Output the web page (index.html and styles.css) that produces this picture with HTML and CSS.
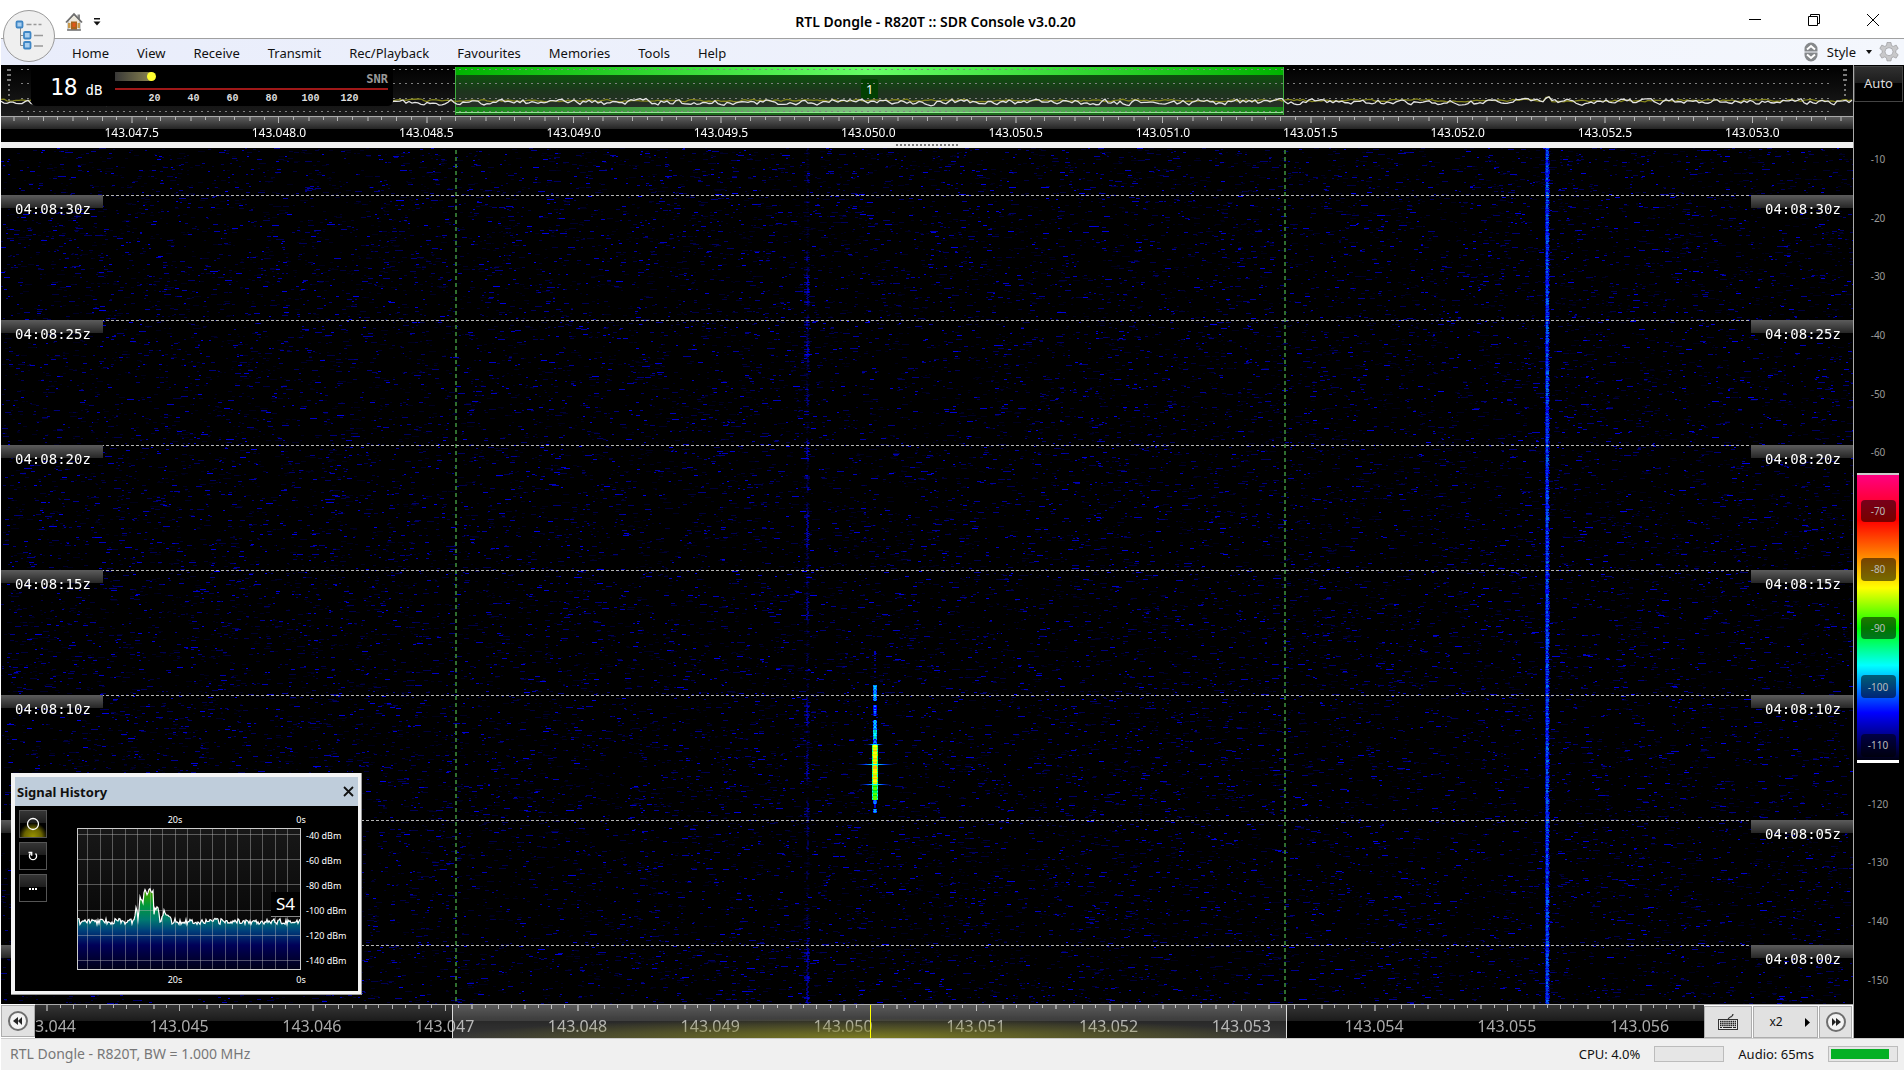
FILE: index.html
```html
<!DOCTYPE html>
<html lang="en">
<head>
<meta charset="utf-8">
<title>RTL Dongle - R820T :: SDR Console v3.0.20</title>
<link rel="stylesheet" href="styles.css">
</head>
<body>
<header class="titlebar">
  <button class="app-button" aria-label="Application menu">
    <svg width="54" height="54" viewBox="0 0 54 54"><circle cx="27" cy="27" r="25.5" fill="#efefef" stroke="#9a9a9a"/><path d="M18.500 18v18.500h4M18.500 26.500h4" fill="none" stroke="#8a8a8a"/><path d="M24.500 15.500h5m2 0h3m2 0h3M32 26.500h9M32 37h9" stroke="#999" stroke-width="1.300" fill="none"/><g fill="#a9cff0" stroke="#3f86c4" stroke-width="1.800"><rect x="14.500" y="12.500" width="6" height="6" rx="1"/><rect x="22" y="23" width="6.500" height="6.500" rx="1"/><rect x="22" y="33" width="6.500" height="6.500" rx="1"/></g></svg>
  </button>
  <div class="quick">
    <button class="plain" aria-label="Home">
      <svg width="18" height="20" viewBox="0 0 18 20"><path d="M12.500 2.500h2.500v5h-2.500z" fill="#888"/><path d="M3 9l6-6 6 6v9H3z" fill="#ece8dc" stroke="#aaa"/><path d="M1 10.500L9 2l8 8.500" fill="none" stroke="#6e6e6e" stroke-width="1.800"/><path d="M3 11h2.500v5H3zM12.500 11H15v5h-2.500z" fill="#c99a4a"/><path d="M6 9.500h6V18H6z" fill="#a8641c"/><path d="M7.500 11h3v4h-3z" fill="#e0561a"/><path d="M2 18h14" stroke="#777" stroke-width="1.500"/></svg>
    </button>
    <button class="plain" aria-label="Customise toolbar">
      <svg width="8" height="10" viewBox="0 0 8 10"><path d="M1 1h6v1.500H1zM0.500 4.500h7L4 8.500z" fill="#111"/></svg>
    </button>
  </div>
  <h1 class="title">RTL Dongle - R820T :: SDR Console v3.0.20</h1>
  <div class="window-buttons">
    <button class="plain" aria-label="Minimise"><svg width="14" height="14" viewBox="0 0 14 14"><path d="M1 6.500h12" stroke="#000"/></svg></button>
    <button class="plain" aria-label="Restore"><svg width="14" height="14" viewBox="0 0 14 14"><path d="M1.500 3.500h9v9h-9zM3.500 3.500v-2h9v9h-2" fill="none" stroke="#000"/></svg></button>
    <button class="plain" aria-label="Close"><svg width="14" height="14" viewBox="0 0 14 14"><path d="M1 1l12 12M13 1L1 13" stroke="#000"/></svg></button>
  </div>
</header>

<nav class="menubar">
  <div class="menus">
    <button class="plain">Home</button>
    <button class="plain">View</button>
    <button class="plain">Receive</button>
    <button class="plain">Transmit</button>
    <button class="plain">Rec/Playback</button>
    <button class="plain">Favourites</button>
    <button class="plain">Memories</button>
    <button class="plain">Tools</button>
    <button class="plain">Help</button>
  </div>
  <div class="menu-tools">
    <button class="plain" aria-label="Collapse ribbon"><svg width="14" height="20" viewBox="0 0 14 20"><path d="M.5 9.500V7a6.500 6.500 0 0 1 13 0v2.500zM.5 10.500V13a6.500 6.500 0 0 0 13 0v-2.500z" fill="#85888b"/><path d="M3 7.500L7 4l4 3.500M3 12.500L7 16l4-3.500" fill="none" stroke="#fff" stroke-width="2"/></svg></button>
    <button class="plain style-menu">Style <svg width="6" height="4" viewBox="0 0 6 4"><path d="M0 0h6L3 4z" fill="#111"/></svg></button>
    <button class="plain" aria-label="Settings"><svg width="20" height="20" viewBox="0 0 20 20"><g fill="#c8c8ca" stroke="#9a9a9c" stroke-width=".7"><path d="M8 .5h4l.5 3 1.800.9 2.900-1.300 2 3.400-2.400 2v2.200l2.400 2-2 3.400-2.900-1.200-1.800 1-.5 3H8l-.5-3-1.800-1-2.900 1.200-2-3.400 2.400-2V8.500l-2.400-2 2-3.400 2.900 1.300 1.800-.9z"/><circle cx="10" cy="9.700" r="4" fill="#f3f6fd"/></g></svg></button>
  </div>
</nav>

<main class="workspace">
  <div class="displays">
    <section class="spectrum" aria-label="Spectrum">
      <div class="passband"><span class="passband-top"></span><span class="passband-bottom"></span><span class="receiver">1</span></div>
      <canvas class="layer" id="spectrum"></canvas>
      <div class="meter">
        <div class="meter-value">18 <small>dB</small></div>
        <div class="gauge">
          <div class="gauge-head"><span class="gauge-bar"></span><b>SNR</b></div>
          <div class="gauge-line"></div>
          <div class="gauge-scale"><span>20</span><span>40</span><span>60</span><span>80</span><span>100</span><span>120</span></div>
        </div>
      </div>
    </section>

    <div class="ruler ruler-top">
      <canvas class="layer" id="ticks-top"></canvas>
      <div class="ruler-labels">
        <span>143.047.5</span><span>143.048.0</span><span>143.048.5</span><span>143.049.0</span><span>143.049.5</span><span>143.050.0</span><span>143.050.5</span><span>143.051.0</span><span>143.051.5</span><span>143.052.0</span><span>143.052.5</span><span>143.053.0</span>
      </div>
    </div>

    <div class="splitter"><span class="grip"></span></div>

    <section class="waterfall" aria-label="Waterfall">
      <canvas class="layer" id="waterfall"></canvas>
      <div class="timeline">
        <div class="time-row"><time>04:08:30z</time><time>04:08:30z</time></div>
        <div class="time-row"><time>04:08:25z</time><time>04:08:25z</time></div>
        <div class="time-row"><time>04:08:20z</time><time>04:08:20z</time></div>
        <div class="time-row"><time>04:08:15z</time><time>04:08:15z</time></div>
        <div class="time-row"><time>04:08:10z</time><time>04:08:10z</time></div>
        <div class="time-row"><time>04:08:05z</time><time>04:08:05z</time></div>
        <div class="time-row"><time>04:08:00z</time><time>04:08:00z</time></div>
      </div>

      <aside class="history" aria-label="Signal History">
        <header class="history-title"><h2>Signal History</h2>
          <button class="plain" aria-label="Close panel"><svg width="11" height="11" viewBox="0 0 11 11"><path d="M1 1l9 9M10 1l-9 9" stroke="#111" stroke-width="1.800"/></svg></button>
        </header>
        <div class="history-body">
          <div class="history-tools">
            <button class="tool tool-on" aria-label="Record"><svg width="14" height="14" viewBox="0 0 14 14"><circle cx="7" cy="7" r="5.500" fill="none" stroke="#fff" stroke-width="1.300"/></svg></button>
            <button class="tool" aria-label="Reset"><svg width="12" height="12" viewBox="0 0 12 12"><path d="M8.500 3.500a3.600 3.600 0 1 1-5 0M1.500 2.500h3.200v3.200" fill="none" stroke="#fff" stroke-width="1.300"/></svg></button>
            <button class="tool" aria-label="More"><svg width="12" height="8" viewBox="0 0 12 8"><path d="M2 4h2v2H2zM5 4h2v2H5zM8 4h2v2H8z" fill="#fff"/></svg></button>
          </div>
          <div class="chart">
            <div class="seconds"><span>20s</span><span>0s</span></div>
            <div class="plot"><canvas class="layer" id="history"></canvas><span class="s-level">S4</span></div>
            <div class="seconds"><span>20s</span><span>0s</span></div>
          </div>
          <div class="dbm"><span>-40 dBm</span><span>-60 dBm</span><span>-80 dBm</span><span>-100 dBm</span><span>-120 dBm</span><span>-140 dBm</span></div>
        </div>
      </aside>
    </section>

    <div class="tuner">
      <button class="key key-round" aria-label="Tune down"><svg width="22" height="22" viewBox="0 0 22 22"><circle cx="11" cy="11" r="9" fill="#f4f4f4" stroke="#6e6e6e" stroke-width="2"/><path d="M11 7v8l-5-4zM15 7v8l-4-4z" fill="#222"/></svg></button>
      <div class="ruler ruler-bottom">
        <canvas class="layer" id="ticks-bottom"></canvas>
        <div class="ruler-labels">
          <span>143.044</span><span>143.045</span><span>143.046</span><span>143.047</span><span>143.048</span><span>143.049</span><span>143.050</span><span>143.051</span><span>143.052</span><span>143.053</span><span>143.054</span><span>143.055</span><span>143.056</span>
        </div>
        <span class="span-window"></span>
        <span class="tuned"></span>
      </div>
      <div class="keys">
        <button class="key key-wide" aria-label="Enter frequency"><svg width="20" height="18" viewBox="0 0 20 18"><path d="M10 7c0-4 5-2 5-6" fill="none" stroke="#333" stroke-width="1.300"/><rect x=".5" y="6.500" width="19" height="10" fill="#e8e8e8" stroke="#333"/><path d="M2 8.500h16M2 10.500h16M2 12.500h16" stroke="#222" stroke-width="1.500" stroke-dasharray="1.500 .6"/><path d="M2 14.500h2m1 0h9m1 0h3" stroke="#222"/></svg></button>
        <button class="key key-zoom">x2 <svg width="5" height="9" viewBox="0 0 5 9"><path d="M0 0l5 4.500L0 9z" fill="#000"/></svg></button>
        <button class="key key-round" aria-label="Tune up"><svg width="22" height="22" viewBox="0 0 22 22"><circle cx="11" cy="11" r="9" fill="#f4f4f4" stroke="#6e6e6e" stroke-width="2"/><path d="M7 7v8l4-4zM11 7v8l5-4z" fill="#222"/></svg></button>
      </div>
    </div>
  </div>

  <aside class="levels">
    <button class="auto">Auto</button>
    <div class="level-scale">
      <span>-10</span><span>-20</span><span>-30</span><span>-40</span><span>-50</span><span>-60</span><span class="chip">-70</span><span class="chip">-80</span><span class="chip">-90</span><span class="chip">-100</span><span class="chip">-110</span><span>-120</span><span>-130</span><span>-140</span><span>-150</span>
    </div>
  </aside>
</main>

<footer class="status">
  <span class="device">RTL Dongle - R820T, BW = 1.000 MHz</span>
  <span class="load">CPU: 4.0%</span><span class="bar"></span>
  <span class="load">Audio: 65ms</span><span class="bar"><i style="width:90%"></i></span>
</footer>
<script src="app.js"></script>
</body>
</html>
```
FILE: styles.css
```css
* { box-sizing: border-box; }
html, body { height: 100%; }
body {
  margin: 0;
  padding-left: 1px;
  display: flex;
  flex-direction: column;
  background: #fff;
  color: #111;
  font: 13px/18px "Noto Sans", "Open Sans", sans-serif;
  overflow: hidden;
}
button { font: inherit; color: inherit; }
svg { display: block; }
.plain { border: 0; padding: 0; background: none; }
.layer { position: absolute; inset: 0; width: 100%; height: 100%; }

/* title bar */
.titlebar {
  position: relative;
  display: flex;
  align-items: center;
  height: 39px;
  flex: none;
  border-bottom: 1px solid #a0a0a0;
}
.app-button { position: absolute; left: 1px; top: 9px; z-index: 2; border: 0; padding: 0; background: none; }
.quick { display: flex; align-items: center; gap: 10px; padding: 6px 0 0 64px; width: 160px; }
.title { flex: 1; margin: 0; padding: 6px 38px 0 0; text-align: center; font-size: 14px; line-height: 18px; font-weight: 600; color: #000; }
.window-buttons { display: flex; gap: 45px; padding: 2px 24px 0 0; }

/* menu bar */
.menubar {
  display: flex;
  justify-content: space-between;
  align-items: center;
  height: 26px;
  flex: none;
  padding: 0 5px 0 71px;
  background: linear-gradient(90deg, #e9edfb, #f4f7fd);
}
.menus { display: flex; gap: 28px; padding-top: 2px; }
.menu-tools { display: flex; align-items: center; gap: 7px; }
.style-menu { display: flex; align-items: center; gap: 10px; padding-left: 2px; }

.workspace { flex: 1; min-height: 0; display: flex; background: #000; }
.displays { flex: 1; min-width: 0; display: flex; flex-direction: column; }

/* spectrum */
.spectrum { position: relative; height: 51px; flex: none; background: linear-gradient(#000, #1c1c1c); }
.passband {
  position: absolute;
  left: 24.500%;
  width: 44.800%;
  top: 2px;
  height: 48px;
  display: flex;
  flex-direction: column;
  justify-content: space-between;
  border-left: 1px solid #3fae3f;
  border-right: 1px solid #3fae3f;
  background: linear-gradient(#056005, #1d351d 50%, #2c2c2c);
}
.passband-top { height: 8px; background: linear-gradient(90deg, #00b400, #66ff66 50%, #00b400); }
.passband-bottom { height: 8px; border-bottom: 2px solid #1c6a1c; background: linear-gradient(90deg, #148014, #80c080 50%, #148014); box-shadow: inset 0 -1px #8fe88f; }
.receiver {
  position: absolute;
  left: 49%;
  top: 12px;
  width: 17px;
  line-height: 20px;
  text-align: center;
  color: #fff;
  background: #024002;
  border-radius: 2px;
}
.meter {
  position: relative;
  display: flex;
  width: 362px;
  height: 39px;
  margin-left: 30px;
  top: 2px;
  padding-left: 19px;
  background: #000;
  border-radius: 5px;
  color: #fff;
  font-family: "DejaVu Sans Mono", monospace;
}
.meter-value { width: 65px; font-size: 23px; line-height: 40px; white-space: nowrap; }
.meter-value small { font-size: 14px; margin-left: -6px; }
.gauge { width: 273px; padding-top: 5px; }
.gauge-head { display: flex; justify-content: space-between; height: 16px; }
.gauge-head b { color: #999; font: bold 12px/14px "DejaVu Sans Mono", monospace; }
.gauge-bar { position: relative; width: 37px; height: 9px; background: linear-gradient(90deg, #383838, #8a8450); }
.gauge-bar::after { content: ""; position: absolute; right: -4px; top: 0; width: 9px; height: 9px; border-radius: 50%; background: #ffff30; }
.gauge-line { height: 2px; background: #a01818; }
.gauge-scale { display: flex; padding-left: 20px; margin-top: 3px; }
.gauge-scale span { width: 39px; flex: none; text-align: center; font: bold 10px/12px "Liberation Mono", monospace; color: #ddd; }

/* frequency rulers */
.ruler { position: relative; overflow: hidden; border-top: 1px solid #aaa; }
.ruler-labels { position: relative; display: flex; }
.ruler-labels span { flex: 1; text-align: center; }
.ruler-top { height: 26px; flex: none; background: linear-gradient(#5c5c5c, #222 50%, #000 50%); }
.ruler-top .ruler-labels { padding: 7px 27px 0 57px; color: #fff; font-size: 12px; line-height: 18px; }
.ruler-bottom { flex: 1; background: linear-gradient(#353535, #1b1b1b 48%, #000 48%); }
.ruler-bottom .ruler-labels { margin: 0 -2px 0 -55px; padding-top: 10px; color: #aaa; font-size: 16px; line-height: 22px; }
.span-window {
  position: absolute;
  left: 25%;
  width: 50%;
  top: 0;
  bottom: 0;
  border: solid #ddd;
  border-width: 0 1px;
  background:
    radial-gradient(ellipse 50% 60% at 50% 100%, #8c8c1ccc, #80801c88 40%, #80801c00),
    linear-gradient(#ffffff30, #ffffff26 40%, #ffffff38);
}
.tuned { position: absolute; left: 50%; top: 0; bottom: 0; width: 1px; background: #ff0; }

.splitter { height: 6px; flex: none; display: flex; justify-content: center; align-items: center; background: #f0f0f0; }
.grip { width: 63px; height: 2px; background: repeating-linear-gradient(90deg, #777 0 2px, #0000 2px 4px); }

/* waterfall */
.waterfall { position: relative; flex: 1; min-height: 0; overflow: hidden; }
.timeline { position: relative; padding-top: 47px; }
.time-row {
  display: flex;
  justify-content: space-between;
  height: 125px;
  background: repeating-linear-gradient(90deg, #b4b4b4 0 3px, #0000 3px 5px) 0 0 / 100% 1px no-repeat;
}
.time-row time {
  width: 102px;
  height: 24px;
  padding: 5px 0 0 14px;
  color: #fff;
  font: 14px/18px "DejaVu Sans Mono", monospace;
  background: linear-gradient(#5c5c5c, #262626) 0 0 / 100% 13px no-repeat;
}

/* signal history window */
.history {
  position: absolute;
  left: 10px;
  bottom: 9px;
  width: 351px;
  padding: 4px 3px 3px 4px;
  background: #f4f4f4;
  border: solid #999;
  border-width: 0 1px 1px 0;
}
.history-title { display: flex; justify-content: space-between; align-items: center; height: 29px; padding: 0 4px 0 2px; background: #bfcddb; }
.history-title h2 { margin: 0; font-size: 13px; line-height: 18px; }
.history-body { display: flex; height: 185px; background: #000; color: #fff; font-size: 9px; line-height: 14px; }
.history-tools { display: flex; flex-direction: column; gap: 4px; width: 62px; padding: 4px; }
.tool { display: grid; place-items: center; width: 28px; height: 28px; padding: 0; border: 1px solid #555; background: linear-gradient(#353535, #1c1c1c 48%, #000 48%); }
.tool-on { background: radial-gradient(circle at 50% 100%, #9a9400, #6a6400 30%, #0000 50%), linear-gradient(#353535, #1c1c1c 48%, #000 48%); }
.chart { width: 224px; flex: none; padding-top: 7px; }
.seconds { display: flex; height: 15px; padding-left: 73px; }
.seconds span { width: 50px; flex: none; text-align: center; }
.seconds span + span { margin-left: 76px; }
.plot { position: relative; height: 142px; background: linear-gradient(#181818, #000); border: 1px solid #ccc; }
.chart .seconds:last-child { padding-top: 3px; }
.s-level { position: absolute; right: 0; top: 63px; width: 29px; text-align: center; font-size: 17px; line-height: 24px; background: #000; border-bottom: 1px solid #888; }
.dbm { padding: 17px 0 0 5px; font-size: 9px; white-space: nowrap; }
.dbm span { display: block; height: 25px; line-height: 25px; }

/* tuning strip */
.tuner { display: flex; height: 34px; flex: none; }
.keys { display: flex; gap: 1px; padding-right: 1px; background: #fff; border-top: 1px solid #aaa; }
.key { display: flex; align-items: center; justify-content: center; height: 32px; margin-top: 1px; padding: 0; border: 1px solid #adadad; background: #e1e1e1; }
.key-round { width: 33px; }
.key-wide { width: 48px; }
.key-zoom { width: 65px; gap: 22px; padding-left: 8px; font-size: 12px; }
.tuner > .key-round { width: 34px; outline: 1px solid #fff; }

/* level column */
.levels { width: 51px; flex: none; display: flex; flex-direction: column; border-left: 1px solid #aaa; color: #999; font-size: 10px; line-height: 14px; }
.auto { margin: 1px 1px 0 0; height: 36px; flex: none; padding: 0 0 2px; border: 1px solid #444; background: linear-gradient(#303030, #1c1c1c 48%, #000 48%); color: #ddd; font-size: 13px; }
.level-scale {
  flex: 1;
  display: flex;
  flex-direction: column;
  align-items: center;
  margin: 28px 5px 29px 3px;
  background: linear-gradient(
    #000 39%, #ccc 39% 39.300%, #ff0080 39.300%, #f00 44.400%, #ff0 52.100%, #0f0 56.700%,
    #0ff 60.900%, #00f 66.300%, #000010 71.700%, #fff 71.700% 72%, #000 72%);
}
.level-scale span { flex: 1; display: flex; align-items: center; }
.level-scale .chip { position: relative; isolation: isolate; width: 35px; justify-content: center; color: #bbb; }
.chip::before { content: ""; position: absolute; inset: 18px 0; z-index: -1; border-radius: 4px; background: #0008; }

/* status bar */
.status { display: flex; align-items: center; height: 32px; flex: none; padding: 0 6px 2px 9px; border-top: 1px solid #ccc; background: #f0f0f0; }
.device { flex: 1; color: #777; font-size: 14px; }
.load { margin: 0 14px; }
.bar { width: 70px; height: 16px; padding: 2px; border: 1px solid #bcbcbc; background: #e6e6e6; }
.bar i { display: block; height: 10px; background: #06b025; }
```
FILE: app.js
```javascript
function generator(seed) {
  return function () {
    seed = (seed + 0x6D2B79F5) | 0;
    let t = Math.imul(seed ^ (seed >>> 15), 1 | seed);
    t = (t + Math.imul(t ^ (t >>> 7), 61 | t)) ^ t;
    return ((t ^ (t >>> 14)) >>> 0) / 4294967296;
  };
}

function prepare(id) {
  const canvas = document.getElementById(id);
  const w = canvas.width = canvas.clientWidth;
  const h = canvas.height = canvas.clientHeight;
  return { c: canvas.getContext('2d'), w, h, rnd: generator(7) };
}

function ticks(id, start, step, major) {
  const { c, w } = prepare(id);
  for (let i = -50; i < 200; i++) {
    const x = Math.round(start + i * step);
    if (x < 0 || x > w) continue;
    const tall = i % major === 0;
    c.fillStyle = i % 4 ? '#b4b4b4' : '#888';
    c.fillRect(x, 0, i % 4 ? 1 : 2, tall ? 6 : i % 2 ? 3 : 4);
  }
}

function trace(c, w, rnd, base, amp, colour, peak) {
  c.strokeStyle = colour;
  c.lineWidth = 1.3;
  c.beginPath();
  let v = 0;
  for (let x = 0; x <= w; x += 3) {
    v = v * 0.45 + (rnd() - 0.5) * amp;
    const bump = Math.abs(x - peak) < 4 ? -4 : 0;
    c.lineTo(x, base + v + bump);
  }
  c.stroke();
}

function spectrum() {
  const { c, w, rnd } = prepare('spectrum');
  c.strokeStyle = '#808080';
  c.setLineDash([2, 4]);
  for (const y of [4.5, 18.5, 33.5, 46.5]) {
    c.beginPath(); c.moveTo(20, y); c.lineTo(w - 20, y); c.stroke();
  }
  c.setLineDash([]);
  c.fillStyle = '#777';
  for (const x of [6, w - 10]) {
    for (let y = 4; y < 36; y += 5) c.fillRect(x + (y < 16 ? 0 : 1), y, y < 16 ? 4 : 2, 2);
  }
  trace(c, w, rnd, 35.5, 2, '#85851c', w * 0.835);
  trace(c, w, rnd, 37, 5, '#e4e4e4', w * 0.835);
}

function waterfall() {
  const { c, w, h, rnd } = prepare('waterfall');
  c.fillStyle = '#000';
  c.fillRect(0, 0, w, h);
  for (let i = 0; i < w * h / 48; i++) {
    const b = Math.floor(25 + 215 * Math.pow(rnd(), 2.5));
    c.fillStyle = 'rgb(0,0,' + b + ')';
    c.fillRect(Math.floor(rnd() * w), Math.floor(rnd() * h), 2 + Math.floor(rnd() * rnd() * 7), 1);
  }

  const weak = Math.round(w * 0.4352);
  const carrier = Math.round(w * 0.8347);
  let level = 0.4;
  for (let y = 0; y < h; y++) {
    level = Math.min(0.9, Math.max(0, level + (rnd() - 0.52) * 0.5));
    c.fillStyle = 'rgba(0,0,255,' + level * 0.65 + ')';
    c.fillRect(weak - 1 + Math.floor(rnd() * 2), y, 2, 1);
    if (rnd() > 0.8) c.fillRect(weak - 3, y, 6, 1);
    c.fillStyle = 'rgb(0,0,' + Math.floor(60 + rnd() * 170) + ')';
    c.fillRect(carrier - 2, y, 4 + Math.floor(rnd() * 2), 1);
    c.fillStyle = 'rgb(0,' + Math.floor(rnd() * 120) + ',' + Math.floor(210 + rnd() * 45) + ')';
    c.fillRect(carrier - 1, y, 2 + Math.floor(rnd() * 2), 1);
  }

  const echo = Math.round(w * 0.4714) + 1;
  const blue = ['#00f', '#05f', '#09f'];
  const cyan = ['#07f', '#0af', '#0df'];
  const hot = ['#fe0', '#ff0', '#cf0', '#fb0'];
  const warm = ['#0f4', '#5f0', '#0e0'];
  const pick = list => list[Math.floor(rnd() * list.length)];
  const run = (from, to, core, edge, half) => {
    for (let y = from; y < to; y++) {
      c.fillStyle = pick(edge);
      c.fillRect(echo - half, y, half * 2, 1);
      c.fillStyle = pick(core);
      c.fillRect(half > 2 ? echo - 2 : echo - 1, y, half > 2 ? 4 : 2, 1);
    }
  };
  run(503, 530, ['#006', '#000', '#00b'], ['#0000'], 1);
  run(537, 553, cyan, blue, 2);
  run(557, 568, blue, ['#00a', '#00f'], 2);
  run(572, 582, cyan, blue, 2);
  run(582, 591, ['#0ff', '#0da'], cyan, 2);
  run(591, 596, blue, blue, 2);
  run(596, 636, hot, ['#0f8', '#8f0', '#0fc'], 3);
  run(636, 652, warm, ['#0ff', '#0c8', '#0f8'], 3);
  run(652, 656, cyan, blue, 2);
  run(656, 660, ['#00c'], ['#006'], 1);
  run(661, 665, cyan, blue, 2);

  for (const [y, reach] of [[596, 9], [616, 20], [636, 16]]) {
    const g = c.createLinearGradient(echo - reach, 0, echo + reach, 0);
    g.addColorStop(0, '#0008'); g.addColorStop(0.25, '#03f'); g.addColorStop(0.45, '#0ff');
    g.addColorStop(0.55, '#0ff'); g.addColorStop(0.75, '#03f'); g.addColorStop(1, '#0008');
    c.fillStyle = g;
    c.fillRect(echo - reach, y, reach * 2, 1);
  }

  c.fillStyle = '#2f6e2f';
  for (const f of [0.2452, 0.6929]) {
    for (let y = 2; y < h; y += 7) c.fillRect(Math.round(w * f), y, 2, 4);
  }
}

function history() {
  const { c, w, h, rnd } = prepare('history');
  const shape = [[0, 93], [56, 93], [58, 80], [60, 90], [62, 68], [65, 72], [67, 61], [69, 64], [71, 59], [75, 62],
    [76, 84], [80, 78], [82, 92], [84, 88], [86, 82], [90, 88], [93, 93], [w, 93]];
  const at = x => {
    for (let i = 1; i < shape.length; i++) {
      const [x0, y0] = shape[i - 1], [x1, y1] = shape[i];
      if (x <= x1) return y0 + (y1 - y0) * (x - x0) / (x1 - x0);
    }
    return 93;
  };
  const points = [];
  for (let x = 0; x <= w; x++) points.push([x, at(x) + (rnd() - 0.6) * 6]);

  const g = c.createLinearGradient(0, 55, 0, h);
  [[0, '#8a9000'], [0.12, '#30a000'], [0.25, '#00983a'], [0.42, '#007a70'], [0.55, '#00407a'], [0.72, '#000058'], [1, '#000018']]
    .forEach(s => g.addColorStop(s[0], s[1]));
  c.fillStyle = g;
  c.beginPath();
  c.moveTo(0, h);
  points.forEach(p => c.lineTo(p[0], p[1]));
  c.lineTo(w, h);
  c.fill();

  c.fillStyle = 'rgba(190,190,190,.42)';
  for (let x = w - 13; x > 0; x -= 12.5) c.fillRect(Math.round(x), 0, 1, h);
  for (let y = 5; y < h; y += 25.2) c.fillRect(0, Math.round(y), w, 1);

  c.strokeStyle = '#fff';
  c.lineWidth = 1.2;
  c.beginPath();
  points.forEach(p => c.lineTo(p[0], p[1]));
  c.stroke();
}

function draw() {
  spectrum();
  waterfall();
  history();
  const top = document.getElementById('ticks-top').clientWidth;
  ticks('ticks-top', 130, (top - 84) / 120, 10);
  const bottom = document.getElementById('ticks-bottom').clientWidth;
  const step = (bottom + 57) / 130;
  ticks('ticks-bottom', -55 + step * 5, step, 10);
}

draw();
window.addEventListener('resize', draw);
```
